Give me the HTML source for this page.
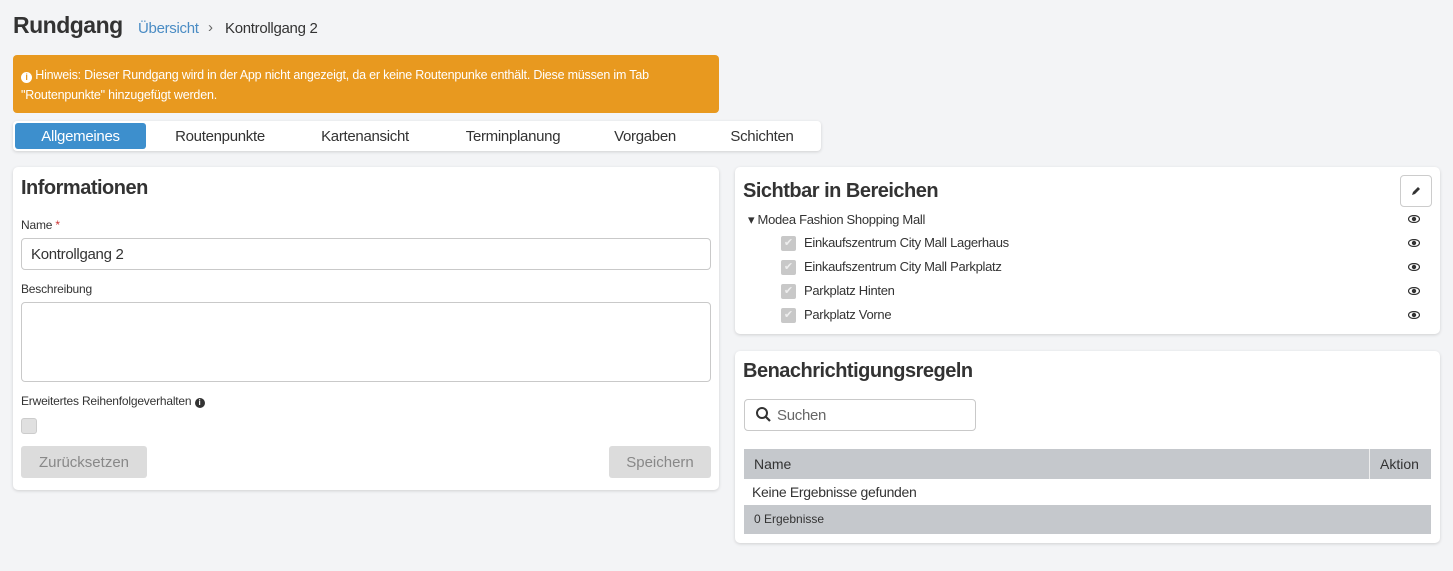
<!DOCTYPE html>
<html><head><meta charset="utf-8"><style>
*{box-sizing:border-box;margin:0;padding:0}
body{width:1453px;height:571px;background:#f3f4f6;font-family:"Liberation Sans",sans-serif;color:#333;position:relative;overflow:hidden;font-size:14px}
.abs{position:absolute}
.card{position:absolute;background:#fff;border-radius:5px;box-shadow:0 1px 3px rgba(0,0,0,.15)}
h2{position:absolute;font-size:20px;font-weight:bold;color:#333;letter-spacing:-.5px}
.lbl{position:absolute;font-size:12px;color:#333;letter-spacing:-.2px}
.inp{position:absolute;border:1px solid #c9c9c9;border-radius:4px;background:#fff}
.btn{position:absolute;background:#dcdcdc;color:#888;border-radius:3px;font-size:15px;text-align:center;line-height:33px}
.tab{position:absolute;top:122px;height:30px;line-height:30px;font-size:15px;color:#333;text-align:center;letter-spacing:-.3px}
.cb{position:absolute;width:15px;height:15px;background:#c8c8c8;border-radius:2px;color:#eee;font-size:11px;line-height:15px;text-align:center}
.eye{position:absolute;left:1408px;width:12px;height:8px}
.t13{font-size:13px;letter-spacing:-.3px}
</style></head><body>
<div class="abs" style="left:13px;top:12px;font-size:23px;font-weight:bold;color:#333;letter-spacing:-.5px">Rundgang</div>
<div class="abs" style="left:138px;top:20px;font-size:15px;color:#4a8cc4;letter-spacing:-.3px">Übersicht</div>
<div class="abs" style="left:208px;top:19px;font-size:15px;color:#666">›</div>
<div class="abs" style="left:225px;top:20px;font-size:15px;color:#333;letter-spacing:-.3px">Kontrollgang 2</div>

<div class="abs" style="left:13px;top:55px;width:706px;height:58px;background:#e8991f;border-radius:4px;color:#fff;font-size:12.5px;line-height:20px;padding:10px 8px;letter-spacing:-.2px">
<span style="display:inline-block;width:11px;height:11px;border-radius:50%;background:#fff;color:#e8991f;font-size:9px;line-height:11px;text-align:center;font-weight:bold;vertical-align:-1px">i</span> Hinweis: Dieser Rundgang wird in der App nicht angezeigt, da er keine Routenpunke enthält. Diese müssen im Tab "Routenpunkte" hinzugefügt werden.</div>

<div class="abs" style="left:13px;top:121px;width:808px;height:30px;background:#fff;border-radius:4px;box-shadow:0 1px 3px rgba(0,0,0,.15)"></div>
<div class="tab" style="left:15px;top:123px;width:131px;height:26px;line-height:27px;background:#3d8fcd;color:#fff;border-radius:3px">Allgemeines</div>
<div class="tab" style="left:155px;width:130px">Routenpunkte</div>
<div class="tab" style="left:300px;width:130px">Kartenansicht</div>
<div class="tab" style="left:448px;width:130px">Terminplanung</div>
<div class="tab" style="left:580px;width:130px">Vorgaben</div>
<div class="tab" style="left:697px;width:130px">Schichten</div>

<div class="card" style="left:13px;top:167px;width:706px;height:323px"></div>
<h2 style="left:21px;top:177px">Informationen</h2>
<div class="lbl" style="left:21px;top:218px">Name <span style="color:#c33">*</span></div>
<div class="inp" style="left:21px;top:238px;width:690px;height:32px;font-size:15px;padding:7px 9px;letter-spacing:-.3px">Kontrollgang 2</div>
<div class="lbl" style="left:21px;top:282px">Beschreibung</div>
<div class="inp" style="left:21px;top:302px;width:690px;height:80px"></div>
<div class="lbl" style="left:21px;top:394px">Erweitertes Reihenfolgeverhalten <span style="display:inline-block;width:10px;height:10px;border-radius:50%;background:#333;color:#fff;font-size:8px;line-height:10px;text-align:center;font-weight:bold">i</span></div>
<div class="abs" style="left:21px;top:418px;width:16px;height:16px;background:#e0e0e0;border:1px solid #ccc;border-radius:3px"></div>
<div class="btn" style="left:21px;top:446px;width:126px;height:32px">Zurücksetzen</div>
<div class="btn" style="left:609px;top:446px;width:102px;height:32px">Speichern</div>

<div class="card" style="left:735px;top:167px;width:705px;height:167px"></div>
<h2 style="left:743px;top:180px">Sichtbar in Bereichen</h2>
<div class="abs" style="left:1400px;top:175px;width:32px;height:32px;border:1px solid #ccc;border-radius:4px;background:#fff"></div>
<svg class="abs" style="left:1411px;top:186px" width="10" height="10" viewBox="0 0 10 10"><path d="M1 9L2 6 7 1 9 3 4 8Z" fill="#333"/></svg>
<div class="abs t13" style="left:748px;top:212px">▾ Modea Fashion Shopping Mall</div>
<div class="cb" style="left:781px;top:236px">✔</div><div class="abs t13" style="left:804px;top:235px">Einkaufszentrum City Mall Lagerhaus</div>
<div class="cb" style="left:781px;top:260px">✔</div><div class="abs t13" style="left:804px;top:259px">Einkaufszentrum City Mall Parkplatz</div>
<div class="cb" style="left:781px;top:284px">✔</div><div class="abs t13" style="left:804px;top:283px">Parkplatz Hinten</div>
<div class="cb" style="left:781px;top:308px">✔</div><div class="abs t13" style="left:804px;top:307px">Parkplatz Vorne</div>
<svg class="eye" style="top:215px" viewBox="0 0 12 8"><ellipse cx="6" cy="4" rx="5.5" ry="3.5" fill="none" stroke="#333" stroke-width="1.2"/><circle cx="6" cy="4" r="2.2" fill="#333"/></svg>
<svg class="eye" style="top:239px" viewBox="0 0 12 8"><ellipse cx="6" cy="4" rx="5.5" ry="3.5" fill="none" stroke="#333" stroke-width="1.2"/><circle cx="6" cy="4" r="2.2" fill="#333"/></svg>
<svg class="eye" style="top:263px" viewBox="0 0 12 8"><ellipse cx="6" cy="4" rx="5.5" ry="3.5" fill="none" stroke="#333" stroke-width="1.2"/><circle cx="6" cy="4" r="2.2" fill="#333"/></svg>
<svg class="eye" style="top:287px" viewBox="0 0 12 8"><ellipse cx="6" cy="4" rx="5.5" ry="3.5" fill="none" stroke="#333" stroke-width="1.2"/><circle cx="6" cy="4" r="2.2" fill="#333"/></svg>
<svg class="eye" style="top:311px" viewBox="0 0 12 8"><ellipse cx="6" cy="4" rx="5.5" ry="3.5" fill="none" stroke="#333" stroke-width="1.2"/><circle cx="6" cy="4" r="2.2" fill="#333"/></svg>

<div class="card" style="left:735px;top:351px;width:705px;height:192px"></div>
<h2 style="left:743px;top:360px">Benachrichtigungsregeln</h2>
<div class="inp" style="left:744px;top:399px;width:232px;height:32px"></div>
<svg class="abs" style="left:755px;top:406px" width="17" height="17" viewBox="0 0 17 17"><circle cx="7" cy="7" r="5" fill="none" stroke="#333" stroke-width="2"/><path d="M10.5 10.5L15 15" stroke="#333" stroke-width="2.2"/></svg>
<div class="abs" style="left:777px;top:407px;font-size:15px;color:#666;letter-spacing:-.3px">Suchen</div>
<div class="abs" style="left:744px;top:449px;width:687px;height:30px;background:#c5c8cc"></div>
<div class="abs" style="left:1369px;top:449px;width:1px;height:30px;background:#eee"></div>
<div class="abs" style="left:754px;top:456px;font-size:14px">Name</div>
<div class="abs" style="left:1380px;top:456px;font-size:14px">Aktion</div>
<div class="abs" style="left:752px;top:484px;font-size:14px;letter-spacing:-.3px">Keine Ergebnisse gefunden</div>
<div class="abs" style="left:744px;top:505px;width:687px;height:29px;background:#c5c8cc;font-size:12px;padding:7px 10px">0 Ergebnisse</div>
</body></html>
